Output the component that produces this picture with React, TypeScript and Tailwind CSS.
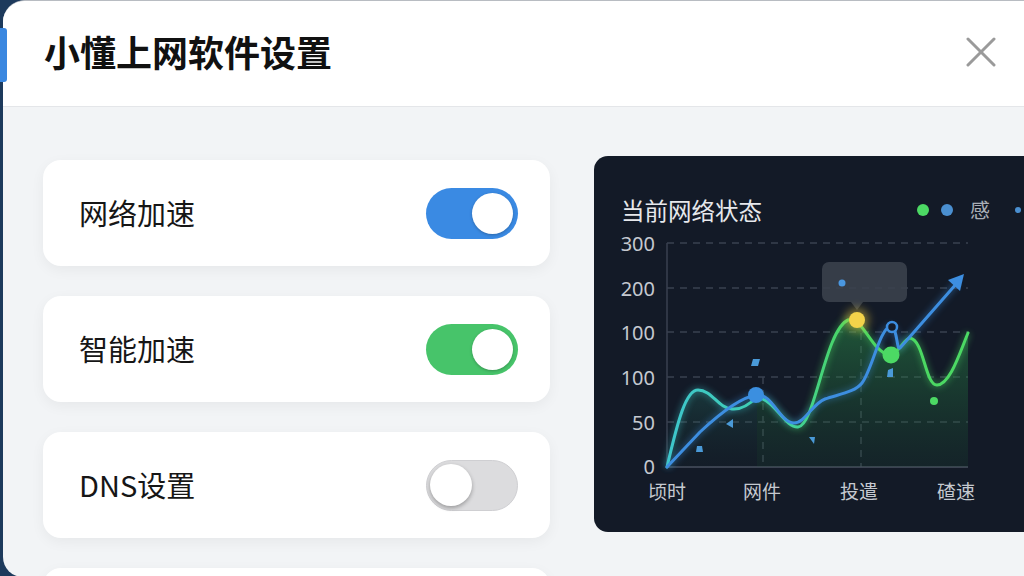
import React from "react";

const CJK = '"Noto Sans CJK SC", "Noto Sans", sans-serif';

function Toggle({ on, color }: { on: boolean; color: string }) {
  if (on) {
    return (
      <div
        className="w-[92px] h-[51px] rounded-full flex items-center justify-end pr-[5px] shrink-0"
        style={{ backgroundColor: color }}
      >
        <div className="w-[41px] h-[41px] rounded-full bg-white shadow-[0_1px_3px_rgba(0,0,0,0.25)]" />
      </div>
    );
  }
  return (
    <div className="w-[92px] h-[51px] rounded-full flex items-center justify-start pl-[3px] shrink-0 bg-[#dcdcde] border border-[#cfcfd2]">
      <div className="w-[42px] h-[42px] rounded-full bg-white shadow-[0_2px_4px_rgba(0,0,0,0.3)]" />
    </div>
  );
}

function Card({ label, children }: { label: string; children?: React.ReactNode }) {
  return (
    <div className="h-[106px] rounded-[18px] bg-white shadow-[0_4px_14px_rgba(0,0,0,0.05)] flex items-center justify-between pl-[36px] pr-[32px] shrink-0">
      <span className="text-[29px] text-[#161616]" style={{ fontFamily: CJK }}>
        {label}
      </span>
      {children}
    </div>
  );
}

function Chart() {
  const yLabels: [string, number][] = [
    ["300", 243],
    ["200", 288],
    ["100", 332],
    ["100", 377],
    ["50", 422],
    ["0", 466],
  ];
  const xLabels: [string, number][] = [
    ["顷时", 667],
    ["网件", 762],
    ["投遣", 859],
    ["碴速", 956],
  ];
  const green =
    "M757,397 C775,400 785,428 798,427 C815,426 825,330 848,320 C862,315 872,352 888,354 C898,356 904,338 910,338 C924,340 925,385 937,385 C950,385 960,352 968,333";
  const teal =
    "M667,467 C678,420 686,390 698,390 C712,390 718,408 732,409 C742,410 750,404 757,397";
  const blue =
    "M667,467 L700,432 C715,418 740,397 757,395 C772,393 780,423 794,423 C805,423 812,404 825,399 C840,394 855,392 862,383 C872,370 880,328 890,327 C898,326 896,350 900,348 L957,283";
  return (
    <svg width="460" height="304" viewBox="0 0 460 304" className="block">
      <defs>
        <linearGradient id="lineG" x1="667" y1="0" x2="968" y2="0" gradientUnits="userSpaceOnUse">
          <stop offset="0" stopColor="#3ec6cc" />
          <stop offset="0.35" stopColor="#3fcfae" />
          <stop offset="0.6" stopColor="#4ad65f" />
          <stop offset="1" stopColor="#4cd964" />
        </linearGradient>
        <linearGradient id="areaG" x1="0" y1="320" x2="0" y2="467" gradientUnits="userSpaceOnUse">
          <stop offset="0" stopColor="#2fa14f" stopOpacity="0.45" />
          <stop offset="1" stopColor="#1c5a34" stopOpacity="0.15" />
        </linearGradient>
        <linearGradient id="areaL" x1="0" y1="390" x2="0" y2="467" gradientUnits="userSpaceOnUse">
          <stop offset="0" stopColor="#2d8f7a" stopOpacity="0.25" />
          <stop offset="1" stopColor="#1c4a3a" stopOpacity="0.05" />
        </linearGradient>
        <filter id="glow" x="-20%" y="-20%" width="140%" height="140%">
          <feGaussianBlur stdDeviation="3" />
        </filter>
        <filter id="glowY" x="-100%" y="-100%" width="300%" height="300%">
          <feGaussianBlur stdDeviation="4" />
        </filter>
      </defs>
      <g transform="translate(-594,-228)">
        {yLabels.map(([t, y], i) => (
          <text
            key={i}
            x="655"
            y={y}
            textAnchor="end"
            dominantBaseline="central"
            fill="#c5c9d0"
            fontSize="20"
            fontFamily='"Noto Sans", sans-serif'
          >
            {t}
          </text>
        ))}
        {[243, 288, 332, 377, 422].map((y) => (
          <line key={y} x1="667" y1={y} x2="968" y2={y} stroke="#3a4150" strokeWidth="1.5" strokeDasharray="7 6" />
        ))}
        <line x1="763" y1="377" x2="763" y2="467" stroke="#3a4150" strokeWidth="1.5" strokeDasharray="7 6" />
        <line x1="861" y1="320" x2="861" y2="467" stroke="#3a4150" strokeWidth="1.5" strokeDasharray="7 6" />
        <line x1="667" y1="243" x2="667" y2="467" stroke="#3a4150" strokeWidth="1.5" />
        <line x1="667" y1="467" x2="968" y2="467" stroke="#4a5161" strokeWidth="1.5" />

        <path d={teal + " L757,467 L667,467 Z"} fill="url(#areaL)" />
        <path d={green + " L968,467 L757,467 Z"} fill="url(#areaG)" />

        <rect x="822" y="262" width="85" height="40" rx="7" fill="#3b414c" opacity="0.9" />
        <polygon points="851,302 863,302 857,310" fill="#3b414c" opacity="0.9" />
        <circle cx="842" cy="283" r="3.5" fill="#4a97e0" />

        <path d={teal} fill="none" stroke="#3ec6cc" strokeWidth="6" opacity="0.35" filter="url(#glow)" />
        <path d={green} fill="none" stroke="#4cd964" strokeWidth="6" opacity="0.35" filter="url(#glow)" />
        <path d={blue} fill="none" stroke="#3b8fe0" strokeWidth="6" opacity="0.35" filter="url(#glow)" />

        <path d={teal} fill="none" stroke="url(#lineG)" strokeWidth="3" strokeLinecap="round" />
        <path d={green} fill="none" stroke="url(#lineG)" strokeWidth="3" strokeLinecap="round" />
        <path d={blue} fill="none" stroke="#3d8ee0" strokeWidth="3" strokeLinecap="round" strokeLinejoin="round" />
        <polygon points="964,274 960,291 948,280" fill="#3d8ee0" />

        <polygon points="753,359 760,359 758,366 751,366" fill="#4a9ad8" />
        <polygon points="733,419 733,428 726,424" fill="#4a9ad8" />
        <polygon points="697,446 702,446 703,452 696,452" fill="#4a9ad8" />
        <polygon points="809,437 815,437 814,444" fill="#4a9ad8" />
        <polygon points="888,370 893,368 893,377 887,377" fill="#4a9ad8" />
        <circle cx="934" cy="401" r="4" fill="#4cd964" />

        <circle cx="756" cy="395" r="8" fill="#3b8fe0" />
        <circle cx="857" cy="320" r="12" fill="#f5d442" opacity="0.45" filter="url(#glowY)" />
        <circle cx="857" cy="320" r="8" fill="#f3d34a" />
        <circle cx="891" cy="355" r="8.5" fill="#4cd964" />
        <circle cx="892" cy="327" r="5" fill="#151c29" stroke="#3d8ee0" strokeWidth="2.5" />

        {xLabels.map(([t, x], i) => (
          <text
            key={i}
            x={x}
            y="490"
            textAnchor="middle"
            dominantBaseline="central"
            fill="#c5c9d0"
            fontSize="19"
            fontFamily={CJK}
          >
            {t}
          </text>
        ))}
      </g>
    </svg>
  );
}

export default function App() {
  return (
    <div className="w-[1024px] h-[576px] overflow-hidden bg-[#1d3a5c] relative">
      <div className="ml-[3px] w-[1021px] h-[577px] rounded-tl-[22px] rounded-bl-[20px] bg-[#f2f4f6] overflow-hidden flex flex-col border-t border-[#b8bcc2]">
        <div className="h-[106px] shrink-0 bg-white border-b border-[#e4e6e9] flex items-center justify-between pl-[41px] pr-[28px]">
          <h1 className="text-[36px] font-bold text-[#111] leading-none mb-[6px]" style={{ fontFamily: CJK }}>
            小懂上网软件设置
          </h1>
          <svg width="30" height="30" viewBox="0 0 30 30" className="mb-[4px]">
            <line x1="2" y1="2" x2="28" y2="28" stroke="#9a9a9a" strokeWidth="3" strokeLinecap="round" />
            <line x1="28" y1="2" x2="2" y2="28" stroke="#9a9a9a" strokeWidth="3" strokeLinecap="round" />
          </svg>
        </div>
        <div className="flex pl-[40px] pt-[53px]">
          <div className="w-[507px] flex flex-col gap-[30px] shrink-0">
            <Card label="网络加速">
              <Toggle on color="#3a8ae3" />
            </Card>
            <Card label="智能加速">
              <Toggle on color="#47c46a" />
            </Card>
            <Card label="DNS设置">
              <Toggle on={false} color="" />
            </Card>
            <div className="h-[106px] rounded-[18px] bg-white shadow-[0_4px_14px_rgba(0,0,0,0.05)] shrink-0" />
          </div>
          <div className="ml-[44px] mt-[-4px] w-[460px] h-[376px] rounded-[14px] bg-[#131a27] shrink-0 flex flex-col overflow-hidden">
            <div className="h-[72px] shrink-0 flex items-start pt-[38px] pl-[27px]">
              <span className="text-[23.5px] leading-[32px] text-[#e6e8ec]" style={{ fontFamily: CJK }}>
                当前网络状态
              </span>
              <div className="flex items-center h-[32px] ml-[155px] gap-[12px]">
                <div className="w-[12px] h-[12px] rounded-full bg-[#4cd964]" />
                <div className="w-[12px] h-[12px] rounded-full bg-[#4a8fd0]" />
                <span className="text-[20px] text-[#a9aeb6] ml-[5px]" style={{ fontFamily: CJK }}>
                  感
                </span>
                <div className="w-[6px] h-[6px] rounded-full bg-[#4a8fd0] ml-[13px]" />
              </div>
            </div>
            <Chart />
          </div>
        </div>
      </div>
      <div className="absolute left-0 top-[28px] w-[7px] h-[54px] rounded-r-[3px] bg-[#3a87e0]" />
    </div>
  );
}
